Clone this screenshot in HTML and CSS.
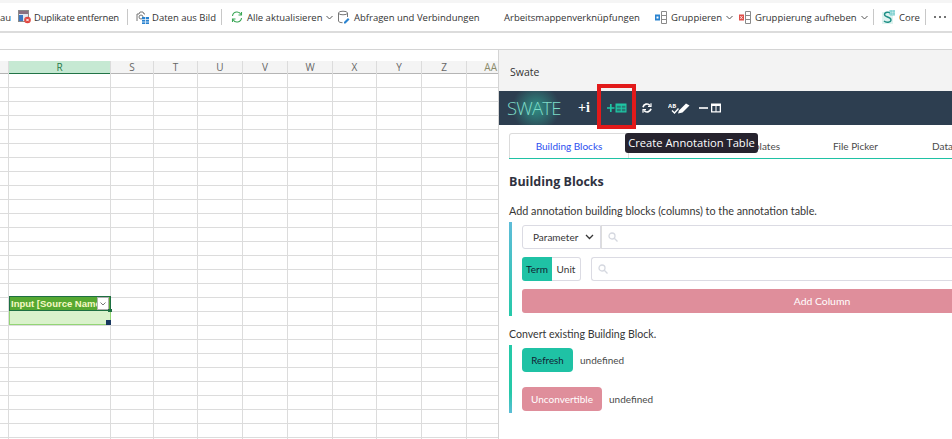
FILE: index.html
```html
<!DOCTYPE html>
<html lang="de">
<head>
<meta charset="utf-8">
<title>Swate</title>
<link rel="stylesheet" href="styles.css">
</head>
<body>
<div class="app">
  <div class="ribbon">
    <span class="rb-text cut">au</span>
    <span class="rb-item i-dup"><svg width="13" height="14" viewBox="0 0 13 14"><rect x=".5" y=".5" width="10" height="11" fill="#dfe6ee" stroke="#8a8a8a"/><rect x="1" y="1" width="9" height="3" fill="#8a6f80"/><rect x="1" y="5" width="4" height="6" fill="#3b78c4"/><circle cx="9.500" cy="10" r="3.300" fill="#e0443e"/><path d="M8.300 8.800l2.400 2.400M10.700 8.800l-2.400 2.400" stroke="#fff"/></svg><span class="t-dup">Duplikate entfernen</span></span>
    <i class="sep s1"></i>
    <span class="rb-item i-bild"><svg width="13" height="14" viewBox="0 0 13 14"><path d="M1 11V4h2l1-2h3l1 2h1" fill="none" stroke="#777"/><circle cx="5" cy="7" r="2" fill="none" stroke="#777"/><rect x="6" y="7" width="7" height="7" fill="#2a83d0"/><path d="M6 9.500h7M6 12h7M9.500 7v7" stroke="#fff" stroke-width=".7"/></svg>Daten aus Bild</span>
    <i class="sep s2"></i>
    <span class="rb-item i-all"><svg width="12" height="12" viewBox="0 0 12 12" fill="none" stroke="#3aa655" stroke-width="1.100"><path d="M1.500 5A4.500 4.500 0 0 1 10 3.500M10.500 7A4.500 4.500 0 0 1 2 8.500"/><path d="M10.500 1v3h-3M1.500 11V8h3"/></svg>Alle aktualisieren<svg class="chev" width="7" height="5" viewBox="0 0 7 5"><path d="M.5 1l3 3 3-3" fill="none" stroke="#555"/></svg></span>
    <span class="rb-item i-abf"><svg width="13" height="14" viewBox="0 0 13 14"><ellipse cx="6" cy="3" rx="4.500" ry="1.800" fill="#fff" stroke="#777"/><path d="M1.500 3v8c0 1 2 1.700 4 1.700M10.500 3v4" fill="none" stroke="#777"/><path d="M7 12l4-4 1.500 1.500-4 4H7z" fill="#2a83d0"/></svg>Abfragen und Verbindungen</span>
    <span class="rb-item i-arb">Arbeitsmappenverknüpfungen</span>
    <span class="rb-item i-gru"><svg width="12" height="13" viewBox="0 0 12 13"><rect x="0" y="3.500" width="5" height="6" fill="#2a83d0"/><rect x="1.500" y="5.500" width="2" height="2" fill="#fff"/><path d="M6.500.5h5v12h-5zM6.500 4.500h5M6.500 8.500h5" fill="#fff" stroke="#8a8a8a"/></svg>Gruppieren<svg class="chev" width="7" height="5" viewBox="0 0 7 5"><path d="M.5 1l3 3 3-3" fill="none" stroke="#555"/></svg></span>
    <span class="rb-item i-auf"><svg width="12" height="13" viewBox="0 0 12 13"><rect x="0" y="3.500" width="5" height="6" fill="#e0504a"/><path d="M1.200 5l2.400 3M3.600 5L1.200 8" stroke="#fff" stroke-width=".7"/><path d="M6.500.5h5v12h-5zM6.500 4.500h5M6.500 8.500h5" fill="#fff" stroke="#8a8a8a"/></svg>Gruppierung aufheben<svg class="chev" width="7" height="5" viewBox="0 0 7 5"><path d="M.5 1l3 3 3-3" fill="none" stroke="#555"/></svg></span>
    <i class="sep s3"></i>
    <span class="rb-item i-core"><svg width="13" height="14" viewBox="0 0 13 14"><rect x="0" y="2" width="11" height="12" fill="#dff3f0"/><path d="M9 3.500C7.500 1.500 2.500 2 2.500 4.500 2.500 7.500 9 6.500 9 10c0 2.500-5 3-7 1" fill="none" stroke="#1f8f86" stroke-width="1.400"/><path d="M8 0h5v5H8z" fill="#fff" stroke="#4bb" stroke-width=".7"/><path d="M9.700 0v5M11.300 0v5M8 1.700h5M8 3.300h5" stroke="#4bb" stroke-width=".5"/></svg>Core</span>
    <i class="sep s4"></i>
    <span class="more"><i></i><i></i><i></i></span>
  </div>
  <div class="formula"></div>
  <div class="workspace">
    <section class="sheet">
      <div class="col corner"><b></b></div>
      <div class="col col-r"><b>R</b></div>
      <div class="col w43"><b>S</b></div>
      <div class="col w44"><b>T</b></div>
      <div class="col w45"><b>U</b></div>
      <div class="col w45"><b>V</b></div>
      <div class="col w45"><b>W</b></div>
      <div class="col w44"><b>X</b></div>
      <div class="col w45"><b>Y</b></div>
      <div class="col w45"><b>Z</b></div>
      <div class="col w-aa"><b>AA</b></div>
      <div class="cell-title">
        <span>Input [Source Name]</span>
        <em><svg width="6" height="4" viewBox="0 0 6 4"><path d="M.5.500l2.500 2.500 2.500-2.500" fill="none" stroke="#777"/></svg></em>
      </div>
      <div class="cell-body"></div>
    </section>
    <aside class="pane">
      <header class="pane-title">Swate</header>
      <nav class="navbar">
        <span class="logo">SWATE</span>
        <span class="nav-ic ni-info">+<i>i</i></span>
        <svg class="nav-ic2 ni-table" width="20" height="10" viewBox="0 0 20 10"><path d="M0 5h7.500M3.800 1v8" stroke="#1fc7a5" stroke-width="1.700"/><path d="M8.500 .5H19.500v9H8.500z" fill="#1fc7a5"/><path d="M9.800 2.800h4v2h-4zM14.800 2.800h3.600v2h-3.600zM9.800 5.800h4v2.400h-4zM14.800 5.800h3.600v2.400h-3.600z" fill="#2d3e50" fill-opacity=".55"/></svg>
        <svg class="nav-ic2 ni-sync" width="10" height="10" viewBox="0 0 10 10" fill="none" stroke="#fff" stroke-width="1.700"><path d="M1 4.200A4 4 0 0 1 8 2.500M9 5.800A4 4 0 0 1 2 7.500"/><path d="M9 .3v3H6M1 9.700v-3h3" stroke-width="1.200"/></svg>
        <svg class="nav-ic2 ni-spell" width="22" height="12" viewBox="0 0 22 12"><text x="0" y="5.500" class="ab">AB</text><path d="M4 8.500l2.500 2.500 4-4.500" fill="none" stroke="#fff" stroke-width="1.400"/><path d="M10 11.500l1-3 7-7 3.500 2-7 7z" fill="#fff"/></svg>
        <svg class="nav-ic2 ni-col" width="22" height="10" viewBox="0 0 22 10"><path d="M0 5h9" stroke="#fff" stroke-width="1.600"/><path d="M12 .5h10v9H12z" fill="#fff"/><path d="M13.300 3h3.200v5.300h-3.200zM17.500 3h3.200v5.300h-3.200z" fill="#2d3e50"/></svg>
      </nav>
      <div class="tabs">
        <span class="tab active">Building Blocks</span>
        <span class="tab t2"></span>
        <span class="tab t3">Templates</span>
        <span class="tab t4">File Picker</span>
        <span class="tab t5">Data</span>
      </div>
      <main class="content">
        <h1>Building Blocks</h1>
        <p class="lead">Add annotation building blocks (columns) to the annotation table.</p>
        <div class="block block-a">
          <div class="row">
            <span class="select">Parameter<svg width="9" height="6" viewBox="0 0 9 6"><path d="M1 1l3.500 3.500L8 1" fill="none" stroke="#363636" stroke-width="1.300"/></svg></span>
            <span class="search s-a"><svg width="10" height="10" viewBox="0 0 10 10" fill="none" stroke="#d5d8e0" stroke-width="1.300"><circle cx="4" cy="4" r="3"/><path d="M6.300 6.300L9.500 9.500"/></svg></span>
          </div>
          <div class="row">
            <span class="toggle"><span class="on">Term</span><span class="off">Unit</span></span>
            <span class="search s-b"><svg width="10" height="10" viewBox="0 0 10 10" fill="none" stroke="#d5d8e0" stroke-width="1.300"><circle cx="4" cy="4" r="3"/><path d="M6.300 6.300L9.500 9.500"/></svg></span>
          </div>
          <div class="add">Add Column</div>
        </div>
        <p class="lead l2">Convert existing Building Block.</p>
        <div class="block block-b">
          <div class="conv"><span class="btn teal">Refresh</span><span class="undef">undefined</span></div>
          <div class="conv c2"><span class="btn pink">Unconvertible</span><span class="undef">undefined</span></div>
        </div>
      </main>
      <div class="hilite"></div>
      <div class="tooltip">Create Annotation Table</div>
    </aside>
  </div>
</div>
</body>
</html>
```
FILE: styles.css
```css
* { box-sizing: border-box; }
html, body { margin: 0; padding: 0; }
body { width: 952px; height: 439px; overflow: hidden; background: #fff; }
.app { width: 952px; height: 439px; display: flex; flex-direction: column; overflow: hidden; }

.ribbon {
  height: 33px; padding-top: 3px; flex: none; display: flex; align-items: center;
  background: linear-gradient(#f5f5f5 3px, #fff 3px);
  border-bottom: 2px solid #dcdcdc;
  font: 9.500px "Open Sans", sans-serif; color: #333; white-space: nowrap;
}
.rb-text, .rb-item { display: inline-flex; align-items: center; gap: 4px; flex: none; }
.cut { width: 18px; }
.t-dup { letter-spacing: -.2px; }
.sep { width: 1px; height: 16px; background: #c8c8c8; flex: none; }
.i-dup { width: 109px; gap: 3px; }
.s1 { margin-right: 8px; }
.i-bild { width: 85px; gap: 3px; }
.s2 { margin-right: 9px; }
.i-all { width: 106px; }
.i-abf { width: 167px; gap: 4px; }
.i-arb { width: 151px; }
.i-gru { width: 84px; gap: 4px; }
.i-auf { width: 134px; gap: 4px; }
.s3 { margin-right: 8px; }
.i-core { width: 43px; gap: 4px; }
.s4 { margin-right: 8px; }
.more { display: flex; gap: 3px; }
.more i { width: 2px; height: 2px; border-radius: 50%; background: #444; }

.formula { height: 17px; flex: none; background: #fff; border-bottom: 1px solid #d4d4d4; }

.workspace { flex: 1; display: flex; min-height: 0; }

.sheet {
  width: 499px; flex: none; display: flex; position: relative; overflow: hidden;
  padding-top: 11px; background-color: #fff; border-right: 1px solid #d4d4d4;
  background-image: repeating-linear-gradient(#fff 0 13px, #dcdcdc 13px 14px);
  background-position: 0 24px;
  background-repeat: no-repeat;
  background-size: 100% 400px;
}
.col { flex: none; border-right: 1px solid #dcdcdc; height: 400px; }
.col b {
  display: block; height: 13px; background: #f4f4f4; border-bottom: 1px solid #b5b5b5;
  font: 400 10px/12px "Open Sans", sans-serif; color: #666; text-align: center;
}
.corner { width: 9px; }
.col-r { width: 102px; }
.col-r b { background: #c6e9d3; border-bottom: 1px solid #217346; color: #2a7a4a; }
.w43 { width: 43px; }
.w44 { width: 44px; }
.w45 { width: 45px; }
.w-aa { width: 32px; border-right: 0; }
.w-aa b { color: #8a8a6a; text-align: right; padding-right: 2px; }

.cell-title {
  position: absolute; left: 9px; top: 246px; width: 102px; height: 15px;
  background: #56a832; border: 1px solid #1e6f42;
  font: 700 9.500px/14px "Liberation Sans", sans-serif; color: #f6f8c4; padding-left: 1px; overflow: hidden; white-space: nowrap;
}
.cell-title em {
  position: absolute; right: 1px; top: 0; width: 12px; height: 13px; background: #fff;
  border: 1px solid #b0b0b0; display: flex; align-items: center; justify-content: center;
}
.cell-body {
  position: absolute; left: 9px; top: 261px; width: 102px; height: 14px;
  background: #daf2cc; border: 1px solid #93d576; border-top: 0;
}
.cell-body::before {
  content: ""; position: absolute; right: -2px; top: -2px; width: 4px; height: 3px; background: #1e6f42;
}
.cell-body::after {
  content: ""; position: absolute; right: -1px; bottom: -1px; width: 5px; height: 5px; background: #17375e;
}

.pane { flex: 1; min-width: 0; position: relative; overflow: hidden; font-family: "Lato", "Noto Sans", sans-serif; color: #363636; }
.pane-title { height: 41px; background: #f3f3f3; font: 10.500px/44px "Open Sans", sans-serif; color: #333; padding-left: 11px; }
.navbar { height: 34px; background: #2d3e50; display: flex; align-items: center; }
.logo {
  flex: none; width: 79px; padding-left: 8px; font: 300 18.500px/34px "Open Sans", sans-serif; letter-spacing: -.8px; color: #7fdcc8;
  background: radial-gradient(circle at 37px 17px, #2f8f85 0, #2d3e50 24px);
  height: 34px;
}
.nav-ic { flex: none; color: #fff; font: 700 14px "Liberation Serif", serif; width: 29px; }
.nav-ic i { font-style: normal; }
.nav-ic2 { flex: none; }
.ni-table { margin-left: 0; }
.ni-sync { margin-left: 15px; }
.ni-spell { margin-left: 16px; }
.ni-col { margin-left: 9px; }
.ab { font: 700 6px "Open Sans", sans-serif; fill: #fff; }

.tabs { height: 35px; padding: 8px 0 0 10px; display: flex; position: relative; font-size: 10px; color: #4a4a4a; white-space: nowrap; }
.tabs::after { content: ""; position: absolute; left: 10px; right: 0; bottom: 1px; height: 1px; background: #1fc2a5; }
.tab { display: flex; align-items: center; justify-content: center; height: 25px; flex: none; }
.tab.active { width: 120px; color: #2b4ff0; border: 1px solid #dbdbdb; border-bottom: 0; border-radius: 3px 3px 0 0; }
.t2 { width: 60px; }
.t3 { width: 91px; justify-content: flex-end; }
.t4 { width: 98px; justify-content: flex-end; }
.t5 { margin-left: 54px; }

.content { padding: 0 0 0 10px; }
h1 { margin: 14px 0 0; font: 700 12.500px/16px "Open Sans", sans-serif; color: #2f3240; }
.lead { margin: 14px 0 0; font-size: 10.800px; line-height: 14px; color: #363636; white-space: nowrap; }
.block { border-left: 3px solid; border-image: linear-gradient(#5fbcd9, #25c9a8) 1; padding-left: 10px; margin-top: 4px; }
.row { display: flex; }
.row + .row { margin-top: 8px; }
.block-a { height: 94px; padding-top: 3px; width: 613px; }
.select {
  width: 79px; height: 24px; border: 1px solid #dbdbe3; border-radius: 3px 0 0 3px; display: flex; align-items: center;
  justify-content: space-between; padding: 0 6px 0 10px; font-size: 10px; flex: none; box-shadow: 1px 0 0 #ddd;
}
.search { flex: 1; height: 24px; border: 1px solid #dbdbe3; display: flex; align-items: center; padding-left: 6px; border-right: 0; }
.s-a { border-left: 0; margin-left: 1px; }
.s-b { margin-left: 10px; border-radius: 3px 0 0 3px; }
.toggle { display: flex; height: 24px; flex: none; font-size: 10px; }
.on { width: 30px; background: #1fc2a5; color: #123; border-radius: 3px 0 0 3px; display: flex; align-items: center; justify-content: center; }
.off { width: 29px; border: 1px solid #dbdbe3; border-left: 0; border-radius: 0 3px 3px 0; display: flex; align-items: center; justify-content: center; }
.add {
  margin-top: 8px; height: 24px; background: #df8e9b; color: #fff; font-size: 10.400px; text-align: center; line-height: 24px;
  border-radius: 3px;
}
.l2 { margin-top: 11px; font-size: 10.600px; }
.block-b { border-image: linear-gradient(#25c9a8, #25c9a8 70%, #5fbcd9) 1; height: 68px; padding-top: 3px; }
.conv { display: flex; align-items: center; gap: 7px; height: 24px; font-size: 10px; }
.c2 { margin-top: 15px; }
.btn { height: 24px; border-radius: 4px; display: flex; align-items: center; justify-content: center; }
.teal { width: 51px; background: #1fc2a5; color: #123; font-size: 9.700px; }
.pink { width: 80px; background: #df8e9b; color: #fff; }
.undef { color: #4a4a4a; }

.hilite { position: absolute; left: 98px; top: 34px; width: 39px; height: 45px; border: 4px solid #e21a1a; }
.tooltip {
  position: absolute; left: 126px; top: 83px; width: 133px; height: 20px; background: #26232e; color: #fff;
  border-radius: 3px; font: 11.200px/20px "Open Sans", sans-serif; text-align: center; white-space: nowrap;
}
```
